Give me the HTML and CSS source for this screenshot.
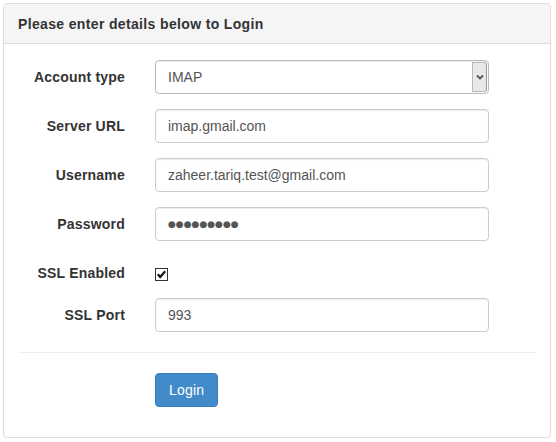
FILE: index.html
```html
<!DOCTYPE html>
<html>
<head>
<meta charset="utf-8">
<link rel="stylesheet" href="styles.css">
</head>
<body>
<div class="panel">
  <div class="panel-heading">Please enter details below to Login</div>
  <div class="panel-body">
    <div class="row">
      <label class="label">Account type</label>
      <div class="select">
        <span class="select-value">IMAP</span>
        <span class="select-arrow">
          <svg width="8" height="6" viewBox="0 0 8 6"><polyline points="1,1.5 4,4.5 7,1.5" fill="none" stroke="#555" stroke-width="1.8"/></svg>
        </span>
      </div>
    </div>
    <div class="row">
      <label class="label">Server URL</label>
      <input class="input" type="text" value="imap.gmail.com">
    </div>
    <div class="row">
      <label class="label">Username</label>
      <input class="input" type="text" value="zaheer.tariq.test@gmail.com">
    </div>
    <div class="row">
      <label class="label">Password</label>
      <input class="input input-password" type="text" value="●●●●●●●●●">
    </div>
    <div class="row row-check">
      <label class="label label-check">SSL Enabled</label>
      <span class="checkbox">
        <svg width="13" height="13" viewBox="0 0 13 13"><rect x="0.5" y="0.5" width="12" height="12" fill="#fff" stroke="#333"/><polyline points="2.8,6.3 5.2,9 10.2,3.3" fill="none" stroke="#111" stroke-width="2.2"/></svg>
      </span>
    </div>
    <div class="row row-last">
      <label class="label">SSL Port</label>
      <input class="input" type="text" value="993">
    </div>
    <hr class="divider">
    <div class="row row-btn">
      <span></span>
      <button class="btn" type="button">Login</button>
    </div>
  </div>
</div>
</body>
</html>
```
FILE: styles.css
```css
html, body {
  margin: 0;
  padding: 0;
  background: #fff;
}
body {
  font-family: "Liberation Sans", Arial, sans-serif;
  font-size: 14px;
  color: #333;
  padding: 3px 5px 0 3px;
}
.panel {
  width: 546px;
  height: 433px;
  border: 1px solid #ddd;
  border-radius: 4px;
  box-shadow: 0 1px 1px rgba(0,0,0,0.05);
  box-sizing: content-box;
}
.panel-heading {
  height: 40px;
  box-sizing: border-box;
  padding: 10px 14px;
  line-height: 20px;
  font-weight: bold;
  font-size: 14px;
  letter-spacing: 0.35px;
  background: #f5f5f5;
  border-bottom: 1px solid #ddd;
  border-radius: 3px 3px 0 0;
  color: #333;
}
.panel-body {
  padding: 16px 14px 15px 14px;
}
.row {
  display: grid;
  grid-template-columns: 107px 334px;
  column-gap: 30px;
  align-items: center;
  margin-bottom: 15px;
}
.row-check {
  height: 27px;
  align-items: start;
}
.row-last {
  margin-bottom: 0;
}
.label {
  text-align: right;
  font-weight: bold;
  font-size: 14px;
  letter-spacing: 0.2px;
  color: #333;
}
.label-check {
  padding-top: 7px;
  line-height: 20px;
}
.input, .select {
  height: 34px;
  box-sizing: border-box;
  border: 1px solid #ccc;
  border-radius: 4px;
  padding: 6px 12px;
  font-family: "Liberation Sans", Arial, sans-serif;
  font-size: 14px;
  color: #555;
  background: #fff;
  box-shadow: inset 0 1px 1px rgba(0,0,0,0.075);
  outline: none;
  width: 334px;
  margin: 0;
}
.input-password {
  font-family: "DejaVu Sans", sans-serif;
  font-size: 9px;
  letter-spacing: 0px;
}
.select {
  display: flex;
  align-items: center;
  justify-content: space-between;
  padding: 0 1px 0 12px;
  border-color: #bbb;
}
.select-arrow {
  width: 15px;
  height: 30px;
  box-sizing: border-box;
  background: #e8e8e8;
  border: 1px solid #b8b8b8;
  border-right-color: #999;
  border-radius: 0 3px 3px 0;
  display: flex;
  align-items: center;
  justify-content: center;
}
.checkbox {
  display: block;
  padding-top: 12px;
}
.checkbox svg {
  display: block;
}
.divider {
  border: 0;
  border-top: 1px solid #eee;
  margin: 20px 0 20px 0;
}
.row-btn {
  margin-bottom: 0;
}
.btn {
  justify-self: start;
  height: 34px;
  padding: 6px 13px;
  font-family: "Liberation Sans", Arial, sans-serif;
  font-size: 14px;
  line-height: 20px;
  letter-spacing: 0.2px;
  color: #fff;
  background: #428bca;
  border: 1px solid #357ebd;
  border-radius: 4px;
}
```
